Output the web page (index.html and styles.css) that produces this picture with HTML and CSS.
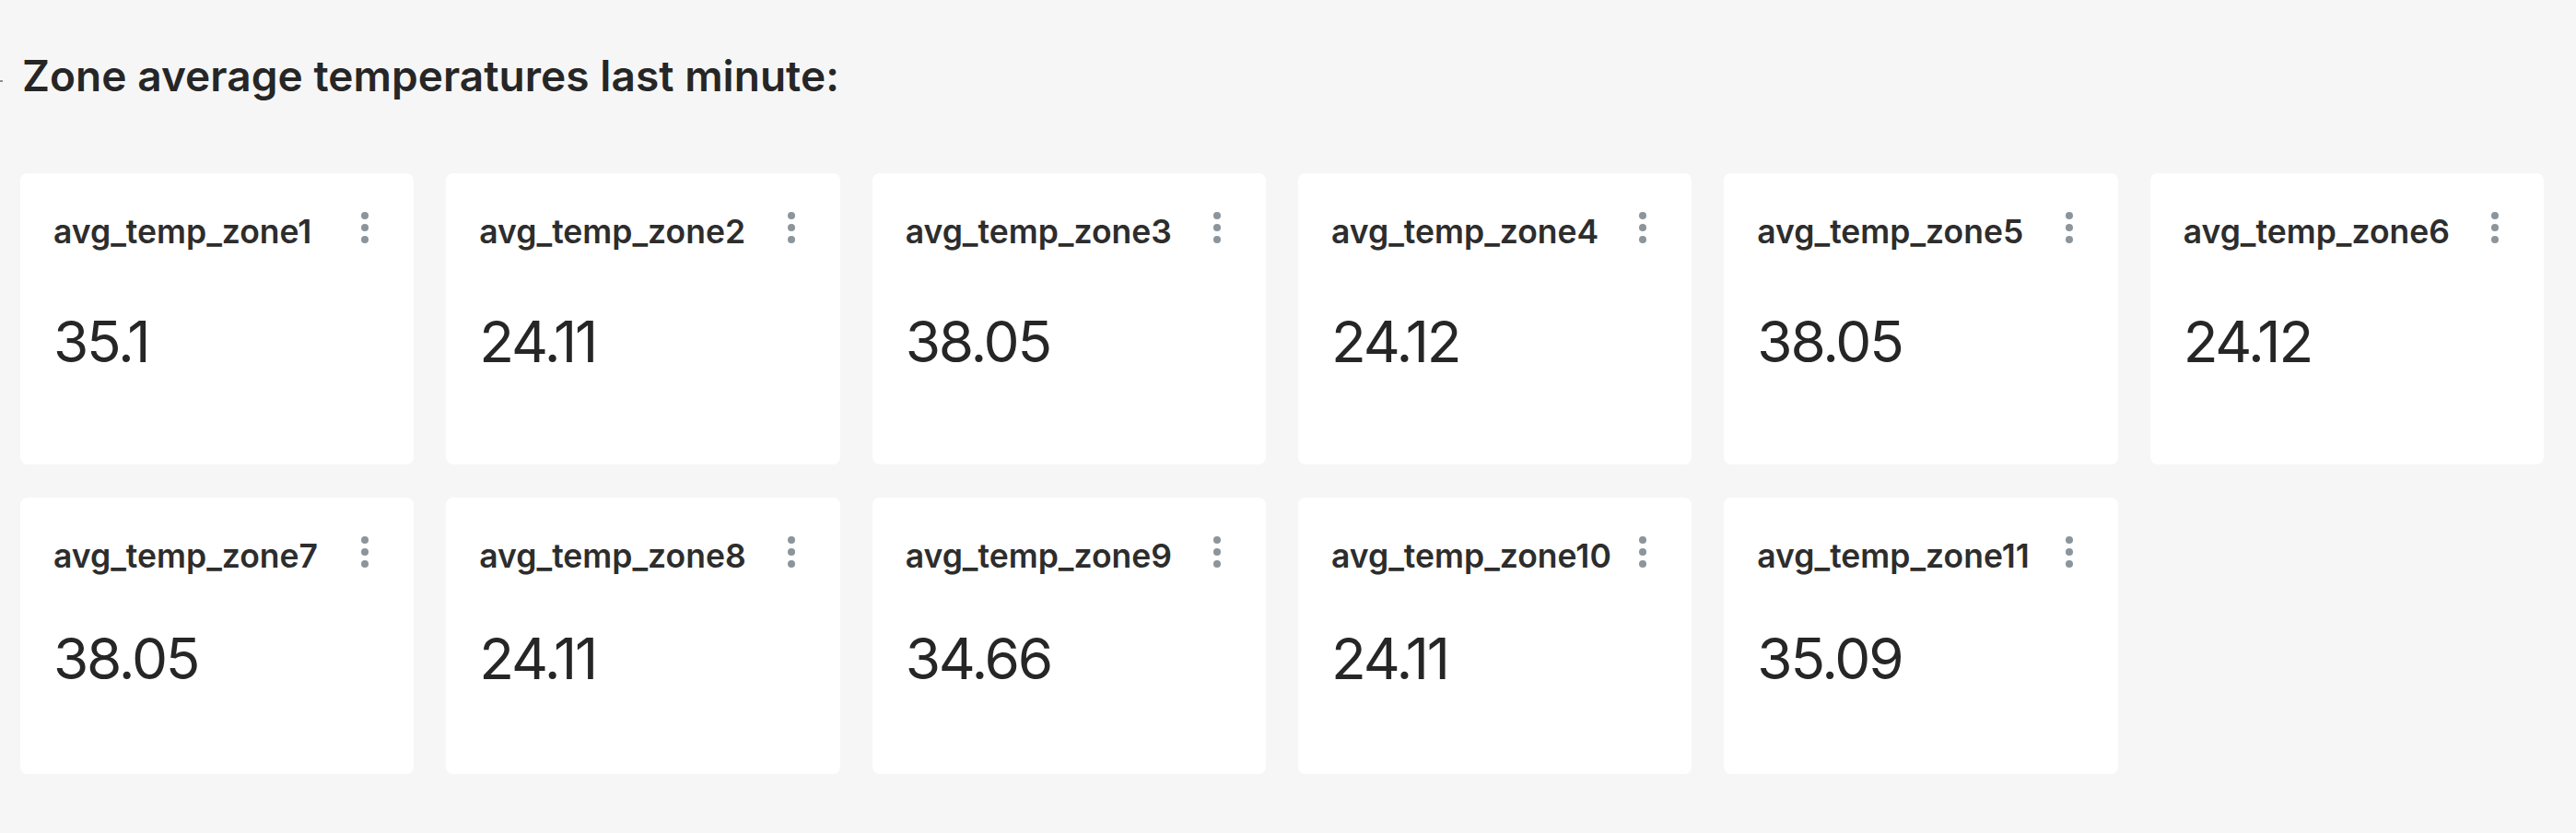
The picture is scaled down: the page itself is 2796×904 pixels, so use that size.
FILE: index.html
```html
<!DOCTYPE html>
<html lang="en">
<head>
<meta charset="utf-8">
<title>Zone average temperatures</title>
<link rel="stylesheet" href="styles.css">
</head>
<body>
<div class="page">
  <span class="edge-mark"></span>
  <h2 class="section-title">Zone average temperatures last minute:</h2>
  <div class="grid">
    <div class="card"><div class="card-head"><span class="card-title">avg_temp_zone1</span><svg class="kebab" width="8" height="34" viewBox="0 0 8 34"><circle cx="4" cy="4" r="4"/><circle cx="4" cy="17" r="4"/><circle cx="4" cy="30" r="4"/></svg></div><div class="card-body"><span class="value">35.1</span></div></div>
    <div class="card"><div class="card-head"><span class="card-title">avg_temp_zone2</span><svg class="kebab" width="8" height="34" viewBox="0 0 8 34"><circle cx="4" cy="4" r="4"/><circle cx="4" cy="17" r="4"/><circle cx="4" cy="30" r="4"/></svg></div><div class="card-body"><span class="value">24.11</span></div></div>
    <div class="card"><div class="card-head"><span class="card-title">avg_temp_zone3</span><svg class="kebab" width="8" height="34" viewBox="0 0 8 34"><circle cx="4" cy="4" r="4"/><circle cx="4" cy="17" r="4"/><circle cx="4" cy="30" r="4"/></svg></div><div class="card-body"><span class="value">38.05</span></div></div>
    <div class="card"><div class="card-head"><span class="card-title">avg_temp_zone4</span><svg class="kebab" width="8" height="34" viewBox="0 0 8 34"><circle cx="4" cy="4" r="4"/><circle cx="4" cy="17" r="4"/><circle cx="4" cy="30" r="4"/></svg></div><div class="card-body"><span class="value">24.12</span></div></div>
    <div class="card"><div class="card-head"><span class="card-title">avg_temp_zone5</span><svg class="kebab" width="8" height="34" viewBox="0 0 8 34"><circle cx="4" cy="4" r="4"/><circle cx="4" cy="17" r="4"/><circle cx="4" cy="30" r="4"/></svg></div><div class="card-body"><span class="value">38.05</span></div></div>
    <div class="card"><div class="card-head"><span class="card-title">avg_temp_zone6</span><svg class="kebab" width="8" height="34" viewBox="0 0 8 34"><circle cx="4" cy="4" r="4"/><circle cx="4" cy="17" r="4"/><circle cx="4" cy="30" r="4"/></svg></div><div class="card-body"><span class="value">24.12</span></div></div>
    <div class="card"><div class="card-head"><span class="card-title">avg_temp_zone7</span><svg class="kebab" width="8" height="34" viewBox="0 0 8 34"><circle cx="4" cy="4" r="4"/><circle cx="4" cy="17" r="4"/><circle cx="4" cy="30" r="4"/></svg></div><div class="card-body"><span class="value">38.05</span></div></div>
    <div class="card"><div class="card-head"><span class="card-title">avg_temp_zone8</span><svg class="kebab" width="8" height="34" viewBox="0 0 8 34"><circle cx="4" cy="4" r="4"/><circle cx="4" cy="17" r="4"/><circle cx="4" cy="30" r="4"/></svg></div><div class="card-body"><span class="value">24.11</span></div></div>
    <div class="card"><div class="card-head"><span class="card-title">avg_temp_zone9</span><svg class="kebab" width="8" height="34" viewBox="0 0 8 34"><circle cx="4" cy="4" r="4"/><circle cx="4" cy="17" r="4"/><circle cx="4" cy="30" r="4"/></svg></div><div class="card-body"><span class="value">34.66</span></div></div>
    <div class="card"><div class="card-head"><span class="card-title">avg_temp_zone10</span><svg class="kebab" width="8" height="34" viewBox="0 0 8 34"><circle cx="4" cy="4" r="4"/><circle cx="4" cy="17" r="4"/><circle cx="4" cy="30" r="4"/></svg></div><div class="card-body"><span class="value">24.11</span></div></div>
    <div class="card"><div class="card-head"><span class="card-title">avg_temp_zone11</span><svg class="kebab" width="8" height="34" viewBox="0 0 8 34"><circle cx="4" cy="4" r="4"/><circle cx="4" cy="17" r="4"/><circle cx="4" cy="30" r="4"/></svg></div><div class="card-body"><span class="value">35.09</span></div></div>
  </div>
</div>
</body>
</html>
```
FILE: styles.css
```css
html, body {
  margin: 0;
  padding: 0;
  background: #f6f6f6;
}

body {
  font-family: Inter, "Noto Sans", "Liberation Sans", sans-serif;
  color: #262626;
}

.page {
  position: relative;
  padding: 54px 35px 0 22px;
}

.edge-mark {
  position: absolute;
  left: 0;
  top: 87px;
  width: 3px;
  height: 2px;
  background: #8f8f8f;
}

.section-title {
  margin: 0 0 78px 0;
  padding-left: 2px;
  font-size: 46px;
  line-height: 56px;
  font-weight: 600;
  letter-spacing: 0.05px;
  color: #262626;
}

.grid {
  display: grid;
  grid-template-columns: repeat(6, 1fr);
  grid-template-rows: 316px 300px;
  column-gap: 35px;
  row-gap: 36px;
}

.card {
  display: flex;
  flex-direction: column;
  background: #ffffff;
  border-radius: 8px;
  padding: 44px 36px 36px 36px;
  box-sizing: border-box;
}

.card-head {
  display: flex;
  justify-content: space-between;
  align-items: flex-start;
  height: 40px;
}

.card-title {
  font-size: 35.5px;
  line-height: 40px;
  font-weight: 600;
  color: #2d2d2d;
  white-space: nowrap;
}

.kebab {
  flex: none;
  margin-top: -2px;
  margin-right: 13px;
  fill: #8b959b;
}

.card-body {
  flex: 1;
  display: flex;
  align-items: center;
}

.value {
  font-size: 62px;
  line-height: 75px;
  font-weight: 400;
  letter-spacing: -2.2px;
  color: #262626;
}
```
